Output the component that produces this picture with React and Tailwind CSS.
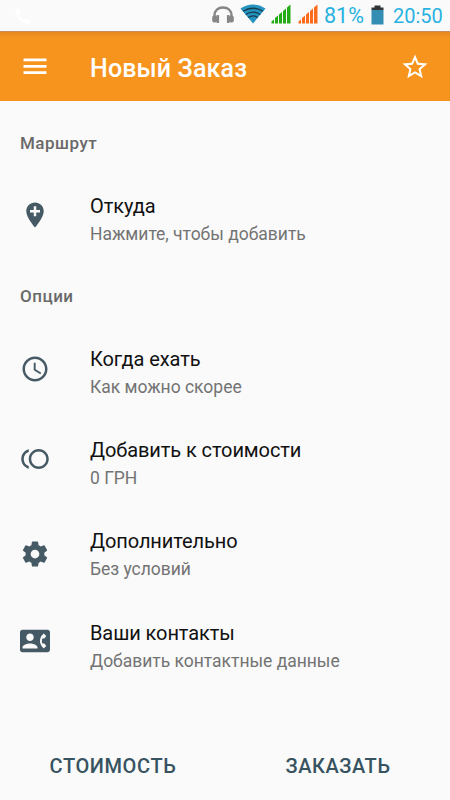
import React from "react";
import {
  MdAddLocation,
  MdAccessTime,
  MdToll,
  MdContactPhone,
  MdStarBorder,
  MdCall,
} from "react-icons/md";

function Menu() {
  return (
    <svg className="size-[30px]" viewBox="0 0 30 30" fill="currentColor">
      <path d="M3.500 6.500H26.500V9.200H3.500ZM3.500 13H26.500V15.700H3.500ZM3.500 19.300H26.500V22H3.500Z" />
    </svg>
  );
}

function Gear({ className }) {
  return (
    <svg className={className} viewBox="0 0 24 24" fill="currentColor">
      <path d="M19.43 12.98c.04-.32.07-.64.07-.98s-.03-.66-.07-.98l2.110-1.650c.19-.15.24-.42.12-.64l-2-3.460c-.12-.22-.39-.3-.61-.22l-2.490 1c-.52-.4-1.080-.73-1.690-.98l-.38-2.650C14.460 2.180 14.250 2 14 2h-4c-.25 0-.46.18-.49.42l-.38 2.650c-.61.25-1.170.59-1.690.98l-2.490-1c-.23-.09-.49 0-.61.22l-2 3.460c-.13.22-.07.49.12.64l2.110 1.650c-.04.32-.07.65-.07.98s.03.66.07.98l-2.110 1.650c-.19.15-.24.42-.12.64l2 3.460c.12.22.39.3.61.22l2.490-1c.52.4 1.080.73 1.690.98l.38 2.650c.03.24.24.42.49.42h4c.25 0 .46-.18.49-.42l.38-2.650c.61-.25 1.170-.59 1.690-.98l2.490 1c.23.09.49 0 .61-.22l2-3.460c.12-.22.07-.49-.12-.64l-2.110-1.650zM12 15.500c-1.930 0-3.500-1.570-3.500-3.500s1.570-3.500 3.500-3.500 3.500 1.570 3.500 3.500-1.570 3.500-3.500 3.500z" />
    </svg>
  );
}

function Headphones() {
  return (
    <svg className="h-[18px] w-[22px]" viewBox="0 0 22 18" fill="none">
      <path d="M2.500 12V9.500C2.500 4.500 6 1.500 11 1.500S19.500 4.500 19.500 9.500V12" stroke="#868686" strokeWidth="2.400" />
      <rect x="0.200" y="9.500" width="4.800" height="7" rx="2" fill="#868686" />
      <rect x="4.400" y="9" width="2.700" height="8" rx="0.800" fill="#868686" />
      <rect x="14.900" y="9" width="2.700" height="8" rx="0.800" fill="#868686" />
      <rect x="17" y="9.500" width="4.800" height="7" rx="2" fill="#868686" />
    </svg>
  );
}

function Wifi() {
  return (
    <svg className="h-[20px] w-[26px]" viewBox="0 0 26 20" fill="none">
      <path d="M0.500 4.500Q13-3.300 25.500 4.500L13 19.500Z" fill="#2493bf" />
      <path d="M3 7.300Q13 1.200 23 7.300M5.700 10.500Q13 5.700 20.300 10.500M8.300 13.500Q13 10.200 17.700 13.500" stroke="#173c4c" strokeWidth="1.300" />
    </svg>
  );
}

function Signal({ color }) {
  return (
    <svg className="h-[20px] w-[20px]" viewBox="0 0 20 20" fill={color}>
      <path d="M0.500 17.500L3 15.500V19.500H0.500ZM4 14L7 11.500V19.500H4ZM8 10.500L11 8V19.500H8ZM12 7L15 4.500V19.500H12ZM16 3.500L19.500 0.500V19.500H16Z" />
    </svg>
  );
}

function Battery() {
  return (
    <svg className="h-[20px] w-[13px]" viewBox="0 0 13 20">
      <path d="M3.500 0.500H9.500V2.500H12.500V5H0.500V2.500H3.500Z" fill="#303638" />
      <path d="M0.500 5H12.500V19.500H0.500Z" fill="#348db2" />
    </svg>
  );
}

function StatusBar() {
  return (
    <div className="flex h-[31px] items-start bg-[#fafafa] pl-[13px] text-[#29b2e1]">
      <MdCall className="mt-[7px] size-[19px] text-white" />
      <div className="ml-[180px] mt-[6px]"><Headphones /></div>
      <div className="ml-[6px] mt-[4px]"><Wifi /></div>
      <div className="ml-[5px] mt-[4px]"><Signal color="#22ab16" /></div>
      <div className="ml-[7px] mt-[4px]"><Signal color="#fd6a1c" /></div>
      <span className="ml-[6px] mt-[4px] w-[41px] whitespace-nowrap text-[21.5px] leading-6">81%</span>
      <div className="ml-[6px] mt-[5px]"><Battery /></div>
      <span className="ml-[9px] mt-[4px] whitespace-nowrap text-[20px] leading-6">20:50</span>
    </div>
  );
}

function Section({ children }) {
  return (
    <h2 className="flex h-[61.25px] items-center pl-5 text-[17px] font-medium tracking-[0.5px] text-[#696969]">
      {children}
    </h2>
  );
}

function Row({ icon: Icon, pad, title, sub }) {
  return (
    <div className="flex h-[91.25px] items-start pl-5">
      <div className={pad}>
        <Icon className="size-[30px] text-[#455a64]" />
      </div>
      <div className="ml-10 whitespace-nowrap pt-[17.5px]">
        <div className="text-[20px] leading-7 tracking-[-0.09px] text-[#111111]">{title}</div>
        <div className="text-[17.5px] leading-7 tracking-[-0.02px] text-[#737373]">{sub}</div>
      </div>
    </div>
  );
}

export default function App() {
  return (
    <div className="flex h-[800px] w-[450px] flex-col overflow-hidden bg-[#fafafa] font-['Roboto',sans-serif]">
      <StatusBar />
      <header className="flex h-[70px] items-center border-t border-[#c98b5a] bg-[#f7941e] bg-linear-to-b from-[#e58a20] to-[#f7941e] to-10% pl-5 pr-5 text-white">
        <Menu />
        <h1 className="ml-10 grow whitespace-nowrap pt-[4px] text-[25px] font-medium leading-8 tracking-[0.15px]">Новый Заказ</h1>
        <MdStarBorder className="size-[30px]" />
      </header>
      <main className="grow pt-[12.5px]">
        <Section>Маршрут</Section>
        <Row icon={MdAddLocation} pad="pt-[25.5px]" title="Откуда" sub="Нажмите, чтобы добавить" />
        <Section>Опции</Section>
        <Row icon={MdAccessTime} pad="pt-[27px]" title="Когда ехать" sub="Как можно скорее" />
        <Row icon={MdToll} pad="pt-[25px]" title="Добавить к стоимости" sub="0 ГРН" />
        <Row icon={Gear} pad="pt-[29px]" title="Дополнительно" sub="Без условий" />
        <Row icon={MdContactPhone} pad="pt-[25px]" title="Ваши контакты" sub="Добавить контактные данные" />
      </main>
      <footer className="grid h-[70px] shrink-0 grid-cols-2 pt-[2px] text-center text-[20px] font-medium text-[#37535f]">
        <button className="pl-px tracking-[0.6px]">СТОИМОСТЬ</button>
        <button className="pl-px tracking-[0.55px]">ЗАКАЗАТЬ</button>
      </footer>
    </div>
  );
}
